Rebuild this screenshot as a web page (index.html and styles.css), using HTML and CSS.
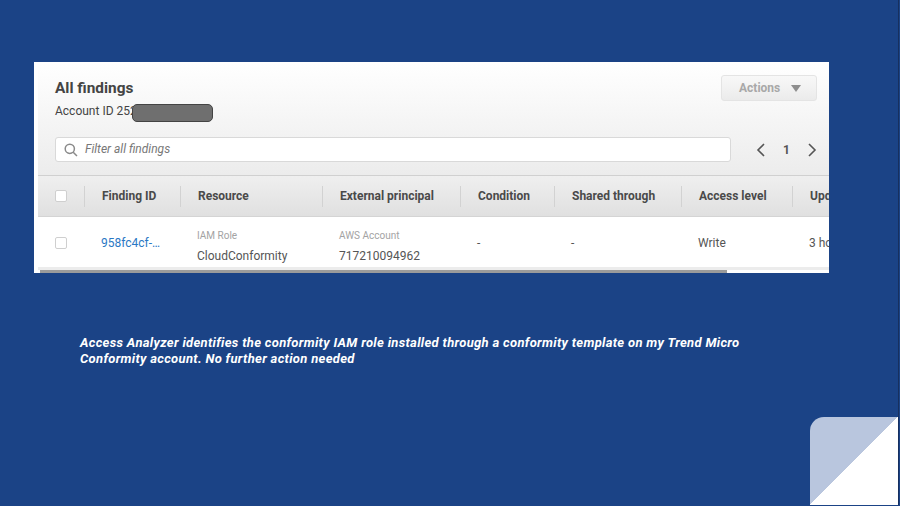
FILE: index.html
```html
<!DOCTYPE html>
<html lang="en">
<head>
  <meta charset="UTF-8">
  <meta name="viewport" content="width=device-width, initial-scale=1.0">
  <title>Access Analyzer findings</title>
  <link rel="stylesheet" href="styles.css">
</head>
<body>
  <div class="slide">
    <div class="shot">
      <div class="panel-top">
        <div class="title-row">
          <div>
            <h1>All findings</h1>
            <p class="account">Account ID 252<span class="redact"></span></p>
          </div>
          <button class="actions">Actions <span class="caret"></span></button>
        </div>
        <div class="filter-row">
          <div class="filter">
            <svg class="search" width="14" height="14" viewBox="0 0 14 14" fill="none" stroke="#8a8a8a" stroke-width="1.5">
              <circle cx="5.8" cy="5.8" r="4.6"/>
              <path d="M9.2 9.2 L13 13"/>
            </svg>
            <span class="filter-text">Filter all findings</span>
          </div>
          <div class="pager">
            <svg width="10" height="14" viewBox="0 0 10 14" fill="none" stroke="#555" stroke-width="1.6"><path d="M8 1 L2 7 L8 13"/></svg>
            <span>1</span>
            <svg width="10" height="14" viewBox="0 0 10 14" fill="none" stroke="#555" stroke-width="1.6"><path d="M2 1 L8 7 L2 13"/></svg>
          </div>
        </div>
      </div>

      <div class="grid head">
        <div class="cell check-cell"><span class="check"></span></div>
        <div class="cell">Finding ID</div>
        <div class="cell">Resource</div>
        <div class="cell">External principal</div>
        <div class="cell">Condition</div>
        <div class="cell">Shared through</div>
        <div class="cell">Access level</div>
        <div class="cell">Upd</div>
      </div>
      <div class="grid row">
        <div class="cell check-cell"><span class="check"></span></div>
        <div class="cell link">958fc4cf-…</div>
        <div class="cell stacked"><small>IAM Role</small>CloudConformity</div>
        <div class="cell stacked"><small>AWS Account</small>717210094962</div>
        <div class="cell">-</div>
        <div class="cell">-</div>
        <div class="cell">Write</div>
        <div class="cell">3 ho</div>
      </div>
      <div class="scroll"><div class="thumb"></div></div>
    </div>

    <p class="note">Access Analyzer identifies the conformity IAM role installed through a conformity template on my Trend Micro Conformity account. No further action needed</p>

    <div class="fold"></div>
  </div>
</body>
</html>
```

FILE: styles.css
```css
html, body {
  margin: 0;
  height: 100%;
  overflow: hidden;
  background-color: #1b4386;
}

.slide {
  position: relative;
  width: 899px;
  height: 505px;
  padding-top: 62px;
  box-sizing: border-box;
  background-color: #1b4386;
  border-right: 1px solid #17305f;
  font-family: Roboto, "Liberation Sans", sans-serif;
}

.shot {
  width: 791px;
  height: 211px;
  margin-left: 34px;
  padding-left: 4px;
  background-color: #fff;
  overflow: hidden;
  color: #444;
}

.panel-top {
  height: 114px;
  padding: 16px 0 0 17px;
  box-sizing: border-box;
  background: linear-gradient(#fff, #ececec);
  border-bottom: 1px solid #d0d0d0;
}

.title-row {
  display: flex;
  justify-content: space-between;
  align-items: flex-start;
  padding-right: 12px;
}

h1 {
  margin: 0;
  font-size: 15.4px;
  line-height: 20px;
  font-weight: 700;
  color: #444;
}

.account {
  display: flex;
  margin: 5px 0 0;
  font-size: 12px;
  line-height: 17px;
  color: #444;
}

.redact {
  width: 81px;
  height: 18px;
  margin: 1px 0 0 -5px;
  background-color: #6f6f6f;
  border: 1px solid #444;
  border-radius: 5px;
  box-sizing: border-box;
}

.actions {
  display: flex;
  align-items: center;
  gap: 11px;
  width: 96px;
  height: 26px;
  margin-top: -3px;
  padding: 0 0 0 17px;
  font-family: inherit;
  font-size: 12px;
  font-weight: 700;
  color: #a8a8a8;
  background: linear-gradient(#f8f8f8, #ebebeb);
  border: 1px solid #e4e4e4;
  border-radius: 3px;
}

.caret {
  width: 0;
  height: 0;
  border-left: 5px solid transparent;
  border-right: 5px solid transparent;
  border-top: 7px solid #8e8e8e;
}

.filter-row {
  display: flex;
  align-items: center;
  margin-top: 15px;
}

.filter {
  display: flex;
  align-items: center;
  gap: 7px;
  width: 676px;
  height: 25px;
  padding-left: 8px;
  box-sizing: border-box;
  background-color: #fff;
  border: 1px solid #d9d9d9;
  border-radius: 3px;
  font-size: 12px;
  font-style: italic;
  color: #777;
}

.filter-text {
  padding-bottom: 2px;
}

.pager {
  display: flex;
  align-items: center;
  gap: 17px;
  margin-left: 25px;
  font-size: 12px;
  font-weight: 700;
  color: #555;
}

.grid {
  display: grid;
  grid-template-columns: 46px 96px 142px 138px 94px 127px 111px 120px;
  width: 791px;
}

.head {
  height: 41px;
  align-items: center;
  font-size: 12px;
  font-weight: 700;
  color: #4a4a4a;
  background: linear-gradient(#efefef, #e0e0e0);
  border-bottom: 1px solid #d4d4d4;
  box-sizing: border-box;
}

.head .cell {
  height: 21px;
  line-height: 21px;
  padding-left: 17px;
  border-left: 1px solid #d2d2d2;
  box-sizing: border-box;
}

.head .check-cell {
  border-left: none;
}

.row {
  height: 53px;
  padding-top: 1px;
  align-items: center;
  font-size: 12px;
  color: #555;
  box-sizing: border-box;
  border-bottom: 3px solid #ececec;
}

.row .cell {
  padding-left: 17px;
}

.cell {
  white-space: nowrap;
  overflow: hidden;
}

.row .stacked {
  padding-top: 7px;
}

.check-cell.cell {
  display: flex;
  align-items: center;
  padding-left: 17px;
}

.check {
  width: 12px;
  height: 12px;
  background-color: #fff;
  border: 1px solid #cfcfcf;
  border-radius: 2px;
  box-sizing: border-box;
}

.link {
  color: #2a78c4;
}

small {
  display: block;
  margin-bottom: 8px;
  font-size: 10px;
  line-height: 11px;
  color: #a3a3a3;
}

.scroll {
  height: 3px;
  padding-left: 2px;
  background-color: #fff;
}

.thumb {
  width: 687px;
  height: 3px;
  background-color: #9b9b9b;
}

.note {
  width: 680px;
  margin: 62px 0 0 80px;
  font-size: 13px;
  letter-spacing: 0.32px;
  line-height: 16px;
  font-weight: 700;
  font-style: italic;
  color: #fff;
}

/* page curl in the corner */
.fold {
  position: absolute;
  right: 0;
  bottom: 0;
  width: 88px;
  height: 88px;
  border-top-left-radius: 14px;
  background: linear-gradient(to bottom right, #b9c6de 50%, #fff 50%);
}
```
